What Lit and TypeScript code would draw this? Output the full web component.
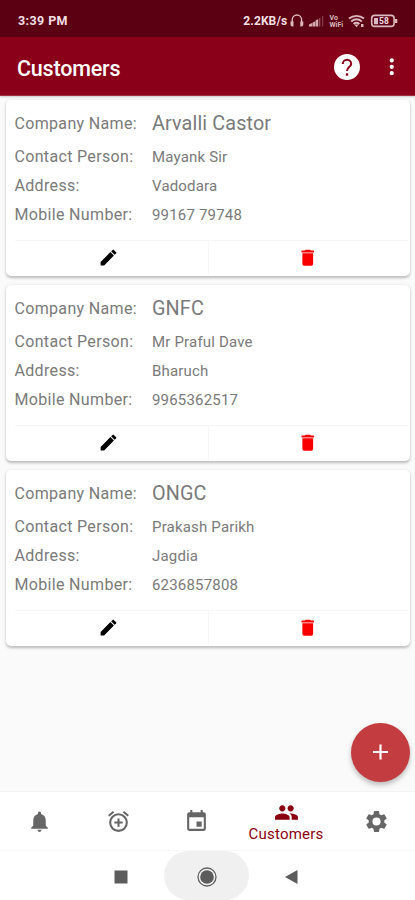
import { LitElement, html, css, svg } from "lit";
import { customElement, property } from "lit/decorators.js";

interface Customer {
  name: string;
  person: string;
  address: string;
  mobile: string;
}

const CUSTOMERS: Customer[] = [
  { name: "Arvalli Castor", person: "Mayank Sir", address: "Vadodara", mobile: "99167 79748" },
  { name: "GNFC", person: "Mr Praful Dave", address: "Bharuch", mobile: "9965362517" },
  { name: "ONGC", person: "Prakash Parikh", address: "Jagdia", mobile: "6236857808" },
];

const ICONS: Record<string, string> = {
  edit: "M3 17v4h4L18.2 9.8l-4-4L3 17zM20.71 7.34a1 1 0 0 0 0-1.41l-2.64-2.64a1 1 0 0 0-1.41 0l-1.700 1.700 4 4 1.750-1.650z",
  trash: "M6 19a2 2 0 0 0 2 2h8a2 2 0 0 0 2-2V7H6v12zM19 4h-3.5l-1-1h-5l-1 1H5v2h14V4z",
  bell: "M12 22a2 2 0 0 0 2-2h-4a2 2 0 0 0 2 2zm6-6v-5c0-3.07-1.63-5.64-4.5-6.32V4a1.5 1.5 0 0 0-3 0v.68C7.64 5.36 6 7.92 6 11v5l-2 2v1h16v-1l-2-2z",
  alarm: "M7.88 3.39L6.6 1.86 2 5.71l1.29 1.53 4.59-3.85zM22 5.72l-4.6-3.86-1.29 1.53 4.6 3.86L22 5.72zM12 4a9 9 0 1 0 0 18 9 9 0 0 0 0-18zm0 16a7 7 0 1 1 0-14 7 7 0 0 1 0 14zm1-11h-2v3H8v2h3v3h2v-3h3v-2h-3V9z",
  event: "M17 12h-5v5h5v-5zM16 1v2H8V1H6v2H5a2 2 0 0 0-2 2v14a2 2 0 0 0 2 2h14a2 2 0 0 0 2-2V5a2 2 0 0 0-2-2h-1V1h-2zm3 18H5V8h14v11z",
  people: "M16 11c1.66 0 2.99-1.34 2.99-3S17.66 5 16 5s-3 1.34-3 3 1.34 3 3 3zm-8 0c1.66 0 2.99-1.34 2.99-3S9.66 5 8 5 5 6.34 5 8s1.34 3 3 3zm0 2c-2.33 0-7 1.17-7 3.5V19h14v-2.5C15 14.17 10.33 13 8 13zm8 0c-.29 0-.62.02-.97.05 1.16.84 1.97 1.97 1.97 3.45V19h6v-2.5c0-2.33-4.67-3.5-7-3.5z",
  gear: "M19.43 12.98c.04-.32.07-.64.07-.98s-.03-.66-.07-.98l2.11-1.65a.5.5 0 0 0 .12-.64l-2-3.46a.5.5 0 0 0-.61-.22l-2.49 1a7.3 7.3 0 0 0-1.69-.98l-.38-2.65A.49.49 0 0 0 14 2h-4a.49.49 0 0 0-.49.42l-.38 2.65c-.61.25-1.17.59-1.69.98l-2.49-1a.49.49 0 0 0-.61.22l-2 3.46a.49.49 0 0 0 .12.64l2.11 1.65a7.9 7.9 0 0 0 0 1.96l-2.11 1.65a.5.5 0 0 0-.12.64l2 3.46c.12.22.39.3.61.22l2.49-1c.52.4 1.08.73 1.69.98l.38 2.65c.03.24.24.42.49.42h4c.25 0 .46-.18.49-.42l.38-2.65a7.3 7.3 0 0 0 1.69-.98l2.49 1c.23.09.49 0 .61-.22l2-3.46a.5.5 0 0 0-.12-.64l-2.11-1.65zM12 15.9a3.9 3.9 0 1 1 0-7.8 3.9 3.9 0 0 1 0 7.8z",
  more: "M12 8a2 2 0 1 0 0-4 2 2 0 0 0 0 4zm0 2a2 2 0 1 0 0 4 2 2 0 0 0 0-4zm0 6a2 2 0 1 0 0 4 2 2 0 0 0 0-4z",
};

@customElement("app-icon")
class AppIcon extends LitElement {
  @property() name = "";
  static styles = css`
    :host { display: block; width: 24px; height: 24px; flex: none; }
    svg { display: block; width: 100%; height: 100%; fill: currentColor; }
  `;
  render() {
    return html`<svg viewBox="0 0 24 24">${svg`<path d=${ICONS[this.name]} />`}</svg>`;
  }
}

@customElement("status-bar")
class StatusBar extends LitElement {
  static styles = css`
    :host { display: flex; height: 37px; box-sizing: border-box; padding: 4px 17px 0 18px; align-items: center;
      background: #5a0012; color: #f3dfe2; font: 700 12px/16px Roboto, sans-serif; }
    .clock { flex: 1; font-size: 12.5px; letter-spacing: .4px; }
    .speed { font-size: 12px; letter-spacing: .1px; margin-right: .8px; }
    svg { display: block; flex: none; }
    .glyphs { width: 110px; height: 20px; }
    .volte { font: 700 7px/7px Roboto, sans-serif; fill: #dcb9bf; }
    .level { font: 700 8.5px/9px Roboto, sans-serif; fill: #f3dfe2; }
  `;
  render() {
    return html`
      <span class="clock">3:39 PM</span>
      <span class="speed">2.2KB/s</span>
      <svg class="glyphs" viewBox="0 0 110 20">
        <path d="M4.2 13V8.700a4.700 4.700 0 0 1 9.400 0V13" fill="none" stroke="#dcb9bf" stroke-width="1.4" />
        <path d="M2.500 10.500h3v5H4.500a2 2 0 0 1-2-2zM12.300 10.500h3v3a2 2 0 0 1-2 2h-1z" fill="#dcb9bf" />
        <path d="M21 15.500v-2l3-1.500v3.500zM24.400 15.500V11.800l2.800-1.600v5.300zM27.600 15.500V9.500l2.600-1.500v7.500z" fill="#d3a9b0" />
        <path d="M30.800 15.500V7.500l1.600-1v9zM34.200 15.500V5h1v10.500z" fill="#8f4a56" />
        <text class="volte" x="41.500" y="9">Vo</text>
        <text class="volte" x="41.500" y="15.800" textLength="13.500" lengthAdjust="spacingAndGlyphs">WiFi</text>
        <g fill="none" stroke="#dcb9bf" stroke-width="1.900">
          <path d="M61 7.600c4.500-3.700 10.500-3.700 15 0M63.200 10.400c3.200-2.700 7.400-2.700 10.600 0M65.600 13c1.800-1.500 4-1.500 5.800 0" />
        </g>
        <path d="M66.300 13.500h4.400l-2.200 2.700zM73 13h2.500v3H73z" fill="#dcb9bf" />
        <rect x="83.700" y="4.400" width="22.400" height="11" rx="3" fill="none" stroke="#dcb9bf" stroke-width="1.600" />
        <path d="M86 7h4v6.200h-4zM107 8h2.300v4h-2.300z" fill="#dcb9bf" />
        <text class="level" x="91" y="13">58</text>
      </svg>
    `;
  }
}

@customElement("customer-card")
class CustomerCard extends LitElement {
  @property({ attribute: false }) customer!: Customer;
  static styles = css`
    :host { display: block; height: 176px; box-sizing: border-box; background: #fff; border-radius: 5px;
      box-shadow: 0 1.5px 3px rgba(0, 0, 0, .26); padding: 6px 2px 0 8.5px; color: #7a7a7a;
      font-family: Roboto, sans-serif; }
    .row { display: grid; grid-template-columns: 137.5px 1fr; height: 28.8px; align-items: center; }
    .row.first { height: 37px; }
    .label { font-size: 16px; line-height: 20px; letter-spacing: .33px; white-space: nowrap; }
    .value { font-size: 15px; line-height: 20px; letter-spacing: .18px; }
    .first .label { padding-bottom: 1px; }
    .first .value { font-size: 19.8px; line-height: 24px; letter-spacing: .12px; padding-bottom: 2px; }
    .actions { display: grid; grid-template-columns: 193.5px 1fr; height: 34px; margin-top: 11px;
      border-top: 1px solid #f6f6f6; }
    .action { display: flex; justify-content: center; align-items: center; padding-bottom: 2px; }
    .action + .action { border-left: 1px solid #f6f6f6; }
    app-icon { width: 21.5px; height: 21.5px; }
    .edit { color: #000; padding-right: 6px; }
    .edit app-icon { width: 21px; height: 21px; }
    .remove { color: #f80000; padding-right: 2px; }
  `;
  render() {
    const c = this.customer;
    return html`
      <div class="row first"><span class="label">Company Name:</span><span class="value">${c.name}</span></div>
      <div class="row"><span class="label">Contact Person:</span><span class="value">${c.person}</span></div>
      <div class="row"><span class="label">Address:</span><span class="value">${c.address}</span></div>
      <div class="row"><span class="label">Mobile Number:</span><span class="value">${c.mobile}</span></div>
      <div class="actions">
        <div class="action edit"><app-icon name="edit"></app-icon></div>
        <div class="action remove"><app-icon name="trash"></app-icon></div>
      </div>
    `;
  }
}

@customElement("app-root")
class AppRoot extends LitElement {
  static styles = css`
    :host { display: flex; flex-direction: column; position: relative; width: 415px; height: 900px; overflow: hidden;
      background: #fafafa; font-family: Roboto, sans-serif; }
    .appbar { display: flex; align-items: center; height: 59px; box-sizing: border-box; padding: 2px 11px 0 17px;
      background: #8b0019; color: #fff; border-bottom: 1px solid #a4303f; box-shadow: 0 1px 2px rgba(0, 0, 0, .2); z-index: 1; }
    .title { flex: 1; font-size: 21.5px; line-height: 28px; font-weight: 500; letter-spacing: -.2px; padding-top: 3px; }
    .help { display: block; flex: none; width: 26px; height: 26px; margin-right: 18.5px; }
    .more { width: 25.5px; height: 25.5px; }
    .list { flex: 1; display: flex; flex-direction: column; gap: 9px; padding: 4px 5px 0 6px; }
    .tabs { display: grid; grid-template-columns: 79px 78px 79px 100px 80px; height: 59px; box-sizing: border-box;
      background: #fff; border-top: 1px solid #f3f3f3; color: #666; }
    .tab { display: flex; flex-direction: column; align-items: center; justify-content: center; }
    .tab app-icon { width: 25px; height: 25px; }
    .tab.active { color: #8b0010; justify-content: flex-start; padding-top: 8px; }
    .caption { font-size: 15px; line-height: 18px; letter-spacing: .2px; }
    .system { display: grid; grid-template-columns: 164px 85px 1fr; height: 50px; box-sizing: border-box;
      background: #fff; border-top: 1px solid #f7f7f7; }
    .key { display: flex; align-items: center; }
    .key svg { display: block; }
    .recent { padding-left: 114px; padding-top: 2px; }
    .home { background: #f0f0f0; border-radius: 25px; justify-content: center; padding-top: 2px; }
    .back { padding-left: 36px; padding-top: 2px; }
    .fab { position: absolute; left: 351px; top: 722.5px; width: 59px; height: 59px; border-radius: 50%;
      background: #c33c3f; box-shadow: 0 3px 5px rgba(0, 0, 0, .25); display: flex; align-items: center; justify-content: center; }
  `;
  render() {
    return html`
      <status-bar></status-bar>
      <div class="appbar">
        <span class="title">Customers</span>
        <svg class="help" viewBox="0 0 26 26">
          <circle cx="13" cy="13" r="13" fill="#fff" />
          <path d="M8.800 9.900a4.200 4.200 0 0 1 8.400 0c0 2.900-4.200 3.200-4.200 7.200" fill="none" stroke="#8b0019" stroke-width="2" />
          <rect x="11.800" y="19.300" width="2.400" height="2.400" fill="#8b0019" />
        </svg>
        <app-icon class="more" name="more"></app-icon>
      </div>
      <div class="list">${CUSTOMERS.map((c) => html`<customer-card .customer=${c}></customer-card>`)}</div>
      <div class="tabs">
        <div class="tab"><app-icon name="bell"></app-icon></div>
        <div class="tab"><app-icon name="alarm"></app-icon></div>
        <div class="tab"><app-icon name="event"></app-icon></div>
        <div class="tab active"><app-icon name="people"></app-icon><span class="caption">Customers</span></div>
        <div class="tab"><app-icon name="gear"></app-icon></div>
      </div>
      <div class="system">
        <div class="key recent"><svg width="14" height="14"><rect x=".5" y=".5" width="13" height="13" fill="#5c5c5c" /></svg></div>
        <div class="key home"><svg width="22" height="22" viewBox="0 0 22 22">
          <circle cx="11" cy="11" r="9" fill="none" stroke="#606060" stroke-width="1.3" /><circle cx="11" cy="11" r="6.8" fill="#5c5c5c" /></svg></div>
        <div class="key back"><svg width="13" height="14"><path d="M0 7L12.5 0v14z" fill="#5c5c5c" /></svg></div>
      </div>
      <div class="fab"><svg width="16" height="16"><path d="M7.5 .5v15M0 8h15" stroke="#fff" stroke-width="2.2" /></svg></div>
    `;
  }
}
